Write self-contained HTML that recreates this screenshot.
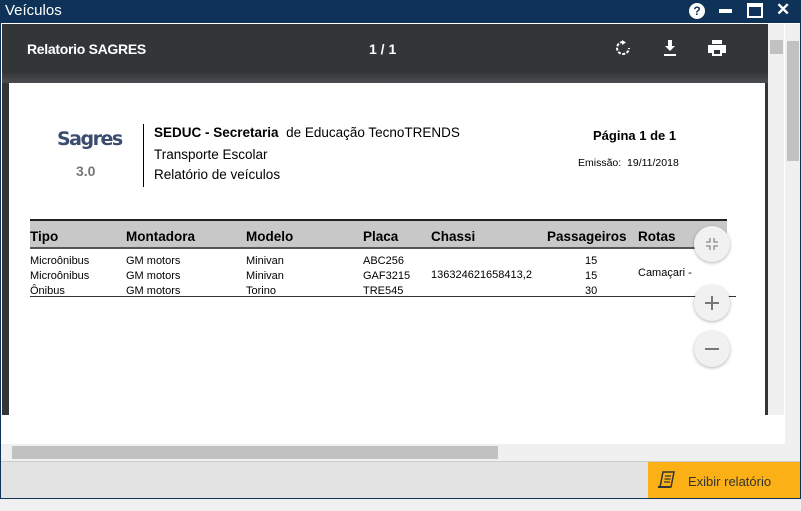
<!DOCTYPE html><html><head><meta charset="utf-8"><style>
*{margin:0;padding:0;box-sizing:border-box}
body{width:801px;height:511px;background:#f0f0f0;font-family:"Liberation Sans",sans-serif;position:relative;overflow:hidden}
.a{position:absolute}
.t{font-family:"Liberation Sans",sans-serif;font-size:11px;color:#000;white-space:nowrap}
</style></head><body>
<div class="a" style="left:0;top:0;width:801px;height:499px;background:#0f3358"></div>
<div class="a" style="left:5px;top:2px;color:#fff;font-size:15px">Veículos</div>
<div class="a" style="left:689px;top:3px;width:16px;height:16px;border-radius:50%;background:#fff;color:#0f3358;font-size:12px;font-weight:bold;text-align:center;line-height:16px">?</div>
<div class="a" style="left:719px;top:9px;width:13px;height:4px;background:#fff"></div>
<div class="a" style="left:747px;top:3px;width:16px;height:15px;border:2px solid #fff;border-top-width:4px"></div>
<div class="a" style="left:776px;top:0px;color:#fff;font-size:17px;font-weight:bold">✕</div>
<div class="a" style="left:1px;top:23px;width:799px;height:475px;background:#fff"></div>
<div class="a" style="left:2px;top:24px;width:766px;height:391px;background:#323639"></div>
<div class="a" style="left:2px;top:73px;width:766px;height:10px;background:linear-gradient(#38393b,#4a4d50)"></div>
<div class="a" style="left:27px;top:41px;color:#fff;font-size:14px;font-weight:bold;letter-spacing:-0.3px">Relatorio SAGRES</div>
<div class="a" style="left:369px;top:41px;color:#fff;font-size:14px;font-weight:bold">1 / 1</div>
<svg class="a" style="left:615px;top:40px" width="16" height="16"><path d="M8 2a6 6 0 1 0 6 6" fill="none" stroke="#fff" stroke-width="2" stroke-dasharray="3 1.5"/><path d="M7 0l4 2.5-4 2.5z" fill="#fff"/></svg>
<svg class="a" style="left:663px;top:40px" width="14" height="16"><path d="M5 0h4v6h3l-5 5-5-5h3z M1 14h12v2H1z" fill="#fff"/></svg>
<svg class="a" style="left:708px;top:40px" width="18" height="16"><path d="M4 0h10v4H4z M0 5h18v8h-4v3H4v-3H0z" fill="#fff"/><rect x="6" y="10" width="6" height="4" fill="#323639"/></svg>
<div class="a" style="left:9px;top:83px;width:756px;height:332px;background:#fff"></div>
<div class="a" style="left:768px;top:24px;width:16px;height:391px;background:#f0f0f0"></div>
<div class="a" style="left:770px;top:40px;width:13px;height:14px;background:#c1c1c1"></div>
<div class="a" style="left:785px;top:24px;width:15px;height:420px;background:#f0f0f0"></div>
<div class="a" style="left:787px;top:41px;width:12px;height:120px;background:#c1c1c1"></div>
<div class="a" style="left:1px;top:416px;width:784px;height:27px;background:#fff"></div>
<div class="a" style="left:1px;top:444px;width:799px;height:17px;background:#f0f0f0"></div>
<div class="a" style="left:12px;top:446px;width:486px;height:13px;background:#c1c1c1"></div>
<div class="a" style="left:1px;top:461px;width:799px;height:37px;background:#e3e3e3;border-top:1px solid #ccc"></div>
<div class="a" style="left:648px;top:462px;width:152px;height:36px;background:#fbb116"></div>
<svg class="a" style="left:657px;top:471px" width="20" height="20"><path d="M6 1h11l-3 15H3z" fill="none" stroke="#333" stroke-width="1.5"/><path d="M8 5h6M7.5 8h6M7 11h6" stroke="#333" stroke-width="1.2"/><path d="M1 16h12" stroke="#333" stroke-width="2"/></svg>
<div class="a" style="left:688px;top:474px;font-size:13px;color:#333">Exibir relatório</div>
<div class="a" style="left:0;top:499px;width:801px;height:12px;background:#f0f0f0"></div>
<div class="a" style="left:57px;top:128px;font-family:'DejaVu Sans',sans-serif;font-weight:bold;font-size:19px;color:#3a4c6e;letter-spacing:-1.5px">Sagres</div>
<div class="a" style="left:76px;top:163px;font-weight:bold;font-size:14px;color:#777">3.0</div>
<div class="a" style="left:143px;top:124px;width:1px;height:63px;background:#000"></div>
<div class="a t" style="left:154px;top:125px;font-size:13.5px"><b>SEDUC - Secretaria</b>&nbsp; de Educação TecnoTRENDS</div>
<div class="a t" style="left:154px;top:147px;font-size:13.5px">Transporte Escolar</div>
<div class="a t" style="left:154px;top:167px;font-size:13.5px">Relatório de veículos</div>
<div class="a t" style="left:593px;top:128px;font-size:13px;font-weight:bold">Página 1 de 1</div>
<div class="a t" style="left:578px;top:157px;font-size:10.5px">Emissão:&nbsp; 19/11/2018</div>
<div class="a" style="left:30px;top:219px;width:697px;height:30px;background:#c8c8c8;border-top:2px solid #222;border-bottom:2px solid #555"></div>
<div class="a t" style="top:229px;left:30px;font-size:13.5px;font-weight:bold">Tipo</div>
<div class="a t" style="top:229px;left:126px;font-size:13.5px;font-weight:bold">Montadora</div>
<div class="a t" style="top:229px;left:246px;font-size:13.5px;font-weight:bold">Modelo</div>
<div class="a t" style="top:229px;left:363px;font-size:13.5px;font-weight:bold">Placa</div>
<div class="a t" style="top:229px;left:431px;font-size:13.5px;font-weight:bold">Chassi</div>
<div class="a t" style="top:229px;left:547px;font-size:13.5px;font-weight:bold">Passageiros</div>
<div class="a t" style="top:229px;left:638px;font-size:13.5px;font-weight:bold">Rotas</div>
<div class="a t" style="top:254px;left:30px;line-height:15px;font-size:11px">Microônibus<br>Microônibus<br>Ônibus</div>
<div class="a t" style="top:254px;left:126px;line-height:15px;font-size:11px">GM motors<br>GM motors<br>GM motors</div>
<div class="a t" style="top:254px;left:246px;line-height:15px;font-size:11px">Minivan<br>Minivan<br>Torino</div>
<div class="a t" style="top:254px;left:363px;line-height:15px;font-size:11px">ABC256<br>GAF3215<br>TRE545</div>
<div class="a t" style="top:269px;left:431px;font-size:11px">136324621658413,2</div>
<div class="a t" style="top:254px;left:585px;line-height:15px;font-size:11px">15<br>15<br>30</div>
<div class="a t" style="top:267px;left:638px;font-size:11px">Camaçari -</div>
<div class="a" style="left:30px;top:296px;width:706px;height:1px;background:#333"></div>
<div class="a" style="left:694px;top:226px;width:36px;height:36px;border-radius:50%;background:#f1f1f1;box-shadow:0 1px 3px rgba(0,0,0,.3)"></div>
<svg class="a" style="left:705px;top:237px" width="14" height="14"><path d="M5 1v4H1M9 1v4h4M5 13V9H1M9 13V9h4" fill="none" stroke="#888" stroke-width="1.3"/></svg>
<div class="a" style="left:694px;top:285px;width:36px;height:36px;border-radius:50%;background:#f1f1f1;box-shadow:0 1px 3px rgba(0,0,0,.3)"></div>
<div class="a" style="left:705px;top:302px;width:14px;height:2px;background:#777"></div>
<div class="a" style="left:711px;top:296px;width:2px;height:14px;background:#777"></div>
<div class="a" style="left:694px;top:331px;width:36px;height:36px;border-radius:50%;background:#f1f1f1;box-shadow:0 1px 3px rgba(0,0,0,.3)"></div>
<div class="a" style="left:705px;top:348px;width:14px;height:2px;background:#777"></div>
</body></html>
